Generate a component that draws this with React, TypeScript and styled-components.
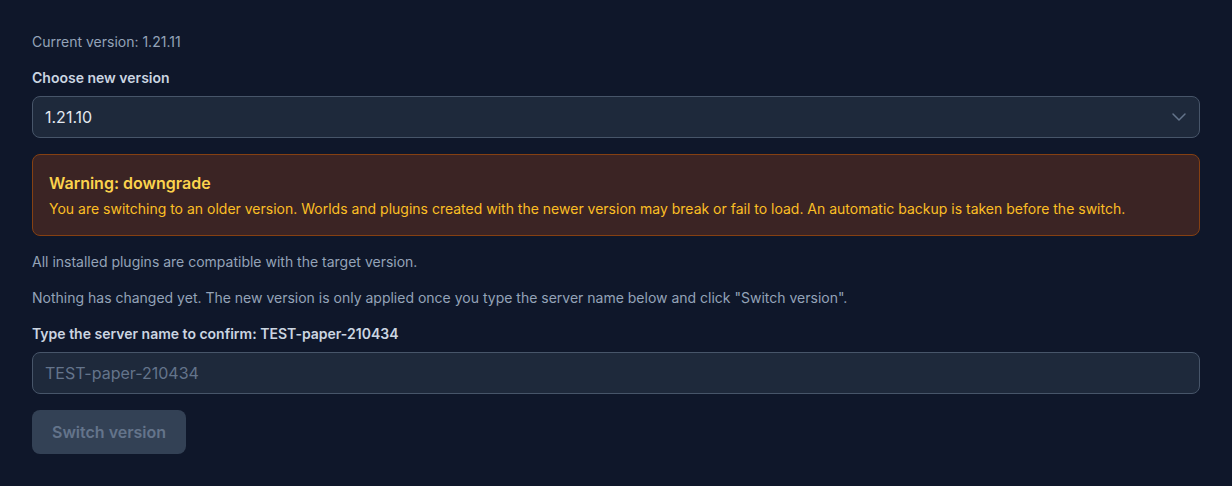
import styled, { createGlobalStyle } from "styled-components";
import { ChevronDown } from "lucide-react";

const Global = createGlobalStyle`
  html, body {
    margin: 0;
    background: #0f172a;
    font-family: Inter, "Noto Sans", sans-serif;
    -webkit-font-smoothing: antialiased;
  }
  * { box-sizing: border-box; }
`;

const Page = styled.div`
  padding: 32px;
  display: flex;
  flex-direction: column;
  gap: 16px;
  color: #cbd5e1;
`;

const Muted = styled.p`
  margin: 0;
  font-size: 14px;
  line-height: 20px;
  color: #94a3b8;
`;

const Field = styled.div`
  display: flex;
  flex-direction: column;
  gap: 8px;
`;

const Label = styled.label`
  font-size: 14px;
  line-height: 20px;
  font-weight: 600;
  color: #cbd5e1;
`;

const SelectBox = styled.div`
  position: relative;
  height: 42px;
  display: flex;
  align-items: center;
  padding: 0 12px;
  background: #1e293b;
  border: 1px solid #475569;
  border-radius: 8px;
  font-size: 16px;
  color: #e2e8f0;

  svg {
    position: absolute;
    right: 8px;
    color: #64748b;
  }
`;

const Input = styled.input`
  height: 42px;
  padding: 0 12px;
  background: #1e293b;
  border: 1px solid #475569;
  border-radius: 8px;
  font-family: inherit;
  font-size: 16px;
  color: #e2e8f0;
  outline: none;

  &::placeholder {
    color: #64748b;
  }
`;

const Alert = styled.div`
  padding: 16px;
  background: #3b2424;
  border: 1px solid #854012;
  border-radius: 8px;
`;

const AlertTitle = styled.div`
  font-size: 16px;
  line-height: 24px;
  font-weight: 600;
  color: #fcd34d;
  margin-bottom: 4px;
`;

const AlertText = styled.div`
  font-size: 14px;
  line-height: 20px;
  color: #fbbf24;
`;

const Button = styled.button`
  align-self: flex-start;
  height: 44px;
  padding: 0 20px;
  border: none;
  border-radius: 8px;
  background: #334155;
  color: #64748b;
  font-family: inherit;
  font-size: 16px;
  font-weight: 600;
  cursor: not-allowed;
`;

export default function App() {
  return (
    <>
      <Global />
      <Page>
        <Muted>Current version: 1.21.11</Muted>
        <Field>
          <Label>Choose new version</Label>
          <SelectBox>
            1.21.10
            <ChevronDown size={24} strokeWidth={1.5} />
          </SelectBox>
        </Field>
        <Alert>
          <AlertTitle>Warning: downgrade</AlertTitle>
          <AlertText>
            You are switching to an older version. Worlds and plugins created with the newer
            version may break or fail to load. An automatic backup is taken before the switch.
          </AlertText>
        </Alert>
        <Muted>All installed plugins are compatible with the target version.</Muted>
        <Muted>
          Nothing has changed yet. The new version is only applied once you type the server name
          below and click "Switch version".
        </Muted>
        <Field>
          <Label>Type the server name to confirm: TEST-paper-210434</Label>
          <Input placeholder="TEST-paper-210434" />
        </Field>
        <Button disabled>Switch version</Button>
      </Page>
    </>
  );
}
